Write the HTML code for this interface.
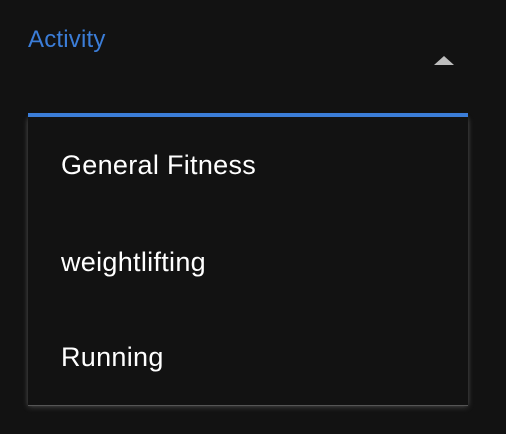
<!DOCTYPE html>
<html><head><style>
html,body{margin:0;padding:0;background:#121212;width:506px;height:434px;overflow:hidden;font-family:"Liberation Sans",Arial,sans-serif}
.label{position:absolute;left:28px;top:26px;font-size:24px;color:#3b7dd8;letter-spacing:0.2px}
.tri{position:absolute;left:434px;top:56px;width:0;height:0;border-left:10px solid transparent;border-right:10px solid transparent;border-bottom:9px solid #bdbdbd}
.bar{position:absolute;left:28px;top:113px;width:440px;height:4px;background:#3b7dd8}
.panel{position:absolute;left:28px;top:117px;width:440px;height:288px;background:#121212;box-shadow:0 1px 0 #555,0 2px 6px rgba(200,200,200,0.25),0 0 4px rgba(160,160,160,0.2)}
.item{position:absolute;left:33px;font-size:27px;color:#fff;letter-spacing:0.3px}
</style></head><body>
<div class="label">Activity</div>
<div class="tri"></div>
<div class="panel">
<div class="item" style="top:33px">General Fitness</div>
<div class="item" style="top:130px">weightlifting</div>
<div class="item" style="top:225px">Running</div>
</div>
<div class="bar"></div>
</body></html>
